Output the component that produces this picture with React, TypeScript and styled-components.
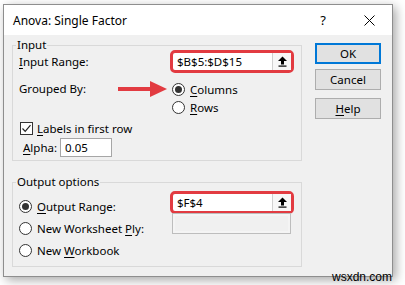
import React from "react";
import styled, { createGlobalStyle } from "styled-components";

const GlobalStyle = createGlobalStyle`
  html, body {
    margin: 0;
    background: #ffffff;
  }
  body {
    font-family: "Noto Sans", "Open Sans", sans-serif;
    font-size: 11.5px;
    color: #000;
  }
`;

const Page = styled.div`
  position: relative;
  width: 405px;
  height: 285px;
  box-sizing: border-box;
  padding: 4px 0 0 3px;
  overflow: hidden;
`;

const Dialog = styled.div`
  width: 390px;
  height: 273px;
  box-sizing: border-box;
  border: 1px solid #8e8e8e;
  background: #f0f0f0;
  box-shadow: 3px 3px 10px rgba(0, 0, 0, 0.35);
  display: flex;
  flex-direction: column;
`;

const TitleBar = styled.div`
  height: 30px;
  flex: none;
  background: #ffffff;
  display: flex;
  align-items: center;
  padding-left: 9px;
`;

const Title = styled.div`
  flex: 1;
  font-size: 12px;
`;

const CaptionButton = styled.div`
  width: 46px;
  height: 30px;
  display: flex;
  align-items: center;
  justify-content: center;
  font-size: 13px;
`;

const Body = styled.div`
  flex: 1;
  display: flex;
  gap: 13px;
  padding: 5px 11px 0 8px;
`;

const LeftColumn = styled.div`
  width: 290px;
  display: flex;
  flex-direction: column;
  gap: 16px;
`;

const Group = styled.fieldset<{ $bottom: number }>`
  margin: 0;
  padding: 0 0 ${(p) => p.$bottom}px 6px;
  border: 1px solid #d9d9d9;
  min-width: 0;
`;

const Legend = styled.legend`
  margin-left: -3px;
  padding: 0 1px;
  line-height: 10px;
`;

const Row = styled.div<{ $top?: number }>`
  display: flex;
  align-items: center;
  margin-top: ${(p) => p.$top ?? 0}px;
`;

const LabelCell = styled.div`
  width: 151px;
  flex: none;
  display: flex;
  align-items: center;
  justify-content: space-between;
  padding-right: 2px;
  box-sizing: border-box;
  line-height: 18px;
  align-self: flex-start;
`;

const Key = styled.span`
  text-decoration: underline;
  text-underline-offset: 2px;
`;

const Highlight = styled.div`
  width: 124px;
  height: 23px;
  box-sizing: border-box;
  border: 3px solid #e23b41;
  border-radius: 5px;
  display: flex;
  background: #ffffff;
`;

const RefText = styled.div`
  flex: 1;
  padding-left: 4px;
  line-height: 17px;
  font-size: 11.5px;
`;

const RefButton = styled.div`
  width: 18px;
  border-left: 1px solid #d0d0d0;
  background: #f7f7f7;
  display: flex;
  align-items: center;
  justify-content: center;
`;

const RadioList = styled.div`
  display: flex;
  flex-direction: column;
  padding-left: 2px;
`;

const Option = styled.div<{ $h: number }>`
  height: ${(p) => p.$h}px;
  display: flex;
  align-items: center;
  gap: 5px;
`;

const Radio = styled.span<{ $on?: boolean }>`
  width: 13px;
  height: 13px;
  box-sizing: border-box;
  border: 1px solid #333;
  border-radius: 50%;
  background: #fff;
  display: flex;
  align-items: center;
  justify-content: center;
  &::after {
    content: "";
    width: 7px;
    height: 7px;
    border-radius: 50%;
    background: ${(p) => (p.$on ? "#333" : "transparent")};
  }
`;

const CheckRow = styled.div`
  height: 18px;
  display: flex;
  align-items: center;
  gap: 4px;
  padding-left: 1px;
  margin-top: 3px;
`;

const CheckBox = styled.span`
  width: 13px;
  height: 13px;
  box-sizing: border-box;
  border: 1px solid #333;
  background: #fff;
  display: flex;
  align-items: center;
  justify-content: center;
`;

const AlphaLabel = styled.div`
  width: 37px;
  padding-left: 4px;
`;

const SmallInput = styled.div`
  width: 52px;
  height: 19px;
  box-sizing: border-box;
  border: 1px solid #a6a6a6;
  background: #fff;
  padding-left: 4px;
  line-height: 17px;
`;

const OutputBody = styled.div`
  display: flex;
`;

const OutputRadios = styled.div`
  width: 151px;
  flex: none;
  padding-top: 8px;
  display: flex;
  flex-direction: column;
`;

const OutputFields = styled.div`
  padding-top: 4px;
  display: flex;
  flex-direction: column;
`;

const DisabledBox = styled.div`
  width: 119px;
  height: 21px;
  box-sizing: border-box;
  margin: -1px 0 0 2px;
  border: 1px solid #bdbdbd;
  background: #f0f0f0;
  box-shadow: inset 0 0 0 2px #f4f4f4;
`;

const ButtonColumn = styled.div`
  display: flex;
  flex-direction: column;
  padding-top: 3px;
`;

const Button = styled.div<{ $primary?: boolean; $top: number }>`
  width: 66px;
  height: 21px;
  box-sizing: border-box;
  margin-top: ${(p) => p.$top}px;
  border: ${(p) => (p.$primary ? "2px solid #0078d7" : "1px solid #adadad")};
  background: #e1e1e1;
  display: flex;
  align-items: center;
  justify-content: center;
`;

const Watermark = styled.div`
  position: absolute;
  right: 13px;
  bottom: 1px;
  font-family: "Liberation Sans", Arial, sans-serif;
  font-size: 12px;
  line-height: 13px;
  color: #000;
`;

const UploadIcon = () => (
  <svg width="9" height="11" viewBox="0 0 9 11">
    <polygon points="0,5 4.5,0.5 9,5" fill="#000" />
    <rect x="3" y="4" width="3" height="4.5" fill="#000" />
    <rect x="0.5" y="9.5" width="8" height="1.2" fill="#000" />
  </svg>
);

const RefField = ({ value }: { value: string }) => (
  <Highlight>
    <RefText>{value}</RefText>
    <RefButton>
      <UploadIcon />
    </RefButton>
  </Highlight>
);

const RedArrow = () => (
  <svg width="50" height="18" viewBox="0 0 50 18">
    <rect x="0" y="7" width="36" height="4" fill="#e23b41" />
    <polygon points="32,1 49,9 32,17" fill="#e23b41" />
  </svg>
);

export default function App() {
  return (
    <>
      <GlobalStyle />
      <Page>
        <Dialog>
          <TitleBar>
            <Title>Anova: Single Factor</Title>
            <CaptionButton>?</CaptionButton>
            <CaptionButton>
              <svg width="11" height="11" viewBox="0 0 11 11">
                <path d="M0.5 0.5 L10.5 10.5 M10.5 0.5 L0.5 10.5" stroke="#000" strokeWidth="1" />
              </svg>
            </CaptionButton>
          </TitleBar>
          <Body>
            <LeftColumn>
              <Group $bottom={3}>
                <Legend>Input</Legend>
                <Row>
                  <LabelCell style={{ alignSelf: "center" }}>
                    <span>
                      <Key>I</Key>nput Range:
                    </span>
                  </LabelCell>
                  <RefField value="$B$5:$D$15" />
                </Row>
                <Row $top={7}>
                  <LabelCell>
                    <span>Grouped By:</span>
                    <RedArrow />
                  </LabelCell>
                  <RadioList>
                    <Option $h={18}>
                      <Radio $on />
                      <span>
                        <Key>C</Key>olumns
                      </span>
                    </Option>
                    <Option $h={18}>
                      <Radio />
                      <span>
                        <Key>R</Key>ows
                      </span>
                    </Option>
                  </RadioList>
                </Row>
                <CheckRow>
                  <CheckBox>
                    <svg width="11" height="11" viewBox="0 0 11 11">
                      <path d="M1.5 5.5 L4.2 8.3 L9.5 2.2" stroke="#222" strokeWidth="1.2" fill="none" />
                    </svg>
                  </CheckBox>
                  <span>
                    <Key>L</Key>abels in first row
                  </span>
                </CheckRow>
                <Row $top={1}>
                  <AlphaLabel>
                    <Key>A</Key>lpha:
                  </AlphaLabel>
                  <SmallInput>0.05</SmallInput>
                </Row>
              </Group>
              <Group $bottom={5}>
                <Legend>Output options</Legend>
                <OutputBody>
                  <OutputRadios>
                    <Option $h={22}>
                      <Radio $on />
                      <span>
                        <Key>O</Key>utput Range:
                      </span>
                    </Option>
                    <Option $h={22}>
                      <Radio />
                      <span>
                        New Worksheet <Key>P</Key>ly:
                      </span>
                    </Option>
                    <Option $h={22}>
                      <Radio />
                      <span>
                        New <Key>W</Key>orkbook
                      </span>
                    </Option>
                  </OutputRadios>
                  <OutputFields>
                    <RefField value="$F$4" />
                    <DisabledBox />
                  </OutputFields>
                </OutputBody>
              </Group>
            </LeftColumn>
            <ButtonColumn>
              <Button $primary $top={0}>OK</Button>
              <Button $top={5}>Cancel</Button>
              <Button $top={8}>
                <span>
                  <Key>H</Key>elp
                </span>
              </Button>
            </ButtonColumn>
          </Body>
        </Dialog>
        <Watermark>wsxdn.com</Watermark>
      </Page>
    </>
  );
}
